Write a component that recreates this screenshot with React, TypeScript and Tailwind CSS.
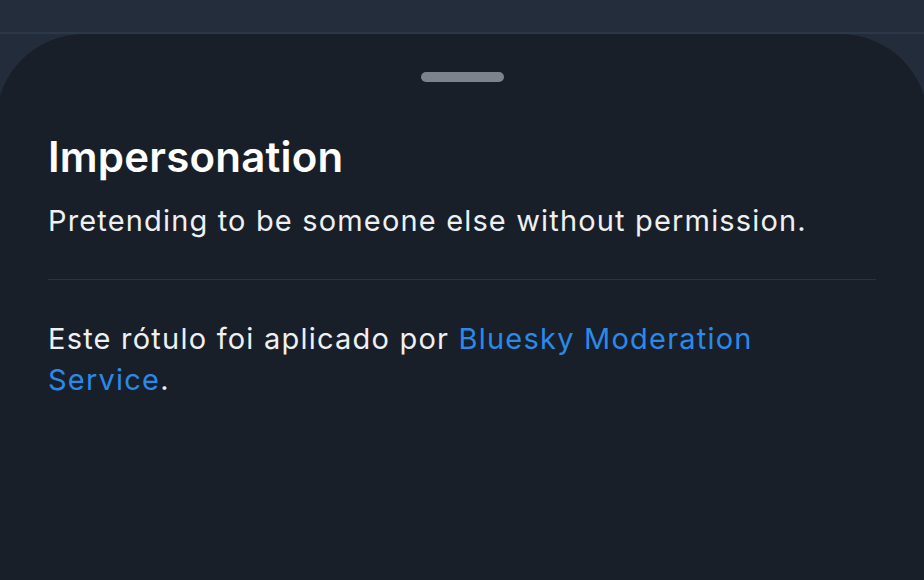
export default function App() {
  return (
    <div
      className="h-[580px] w-[924px] overflow-hidden bg-[#222c3a] text-[#f1f3f5]"
      style={{ fontFamily: "Inter, 'Noto Sans', sans-serif" }}
    >
      <div className="h-[32px] bg-[#232d3c]" />
      <div className="h-[2px] bg-[#2c3747]" />
      <div className="-mx-[4px] h-[546px] rounded-t-[88px] bg-[#181f28] px-[52px]">
        <div className="flex justify-center pt-[38px]">
          <div className="h-[10px] w-[83px] rounded-full bg-[#7d838c]" />
        </div>
        <h1 className="mt-[50px] text-[42px] font-semibold leading-[50px] tracking-[0.005em] text-white">
          Impersonation
        </h1>
        <p className="mt-[19px] text-[29px] leading-[40px] tracking-[0.04em] text-[#eef0f2]">
          Pretending to be someone else without permission.
        </p>
        <div className="mt-[38px] h-px bg-[#2b333e]" />
        <p className="mt-[38px] w-[760px] text-[29px] leading-[41px] tracking-[0.042em] text-[#eef0f2]">
          Este rótulo foi aplicado por{" "}
          <span className="text-[#2a8aea]">Bluesky Moderation Service</span>.
        </p>
      </div>
    </div>
  );
}
